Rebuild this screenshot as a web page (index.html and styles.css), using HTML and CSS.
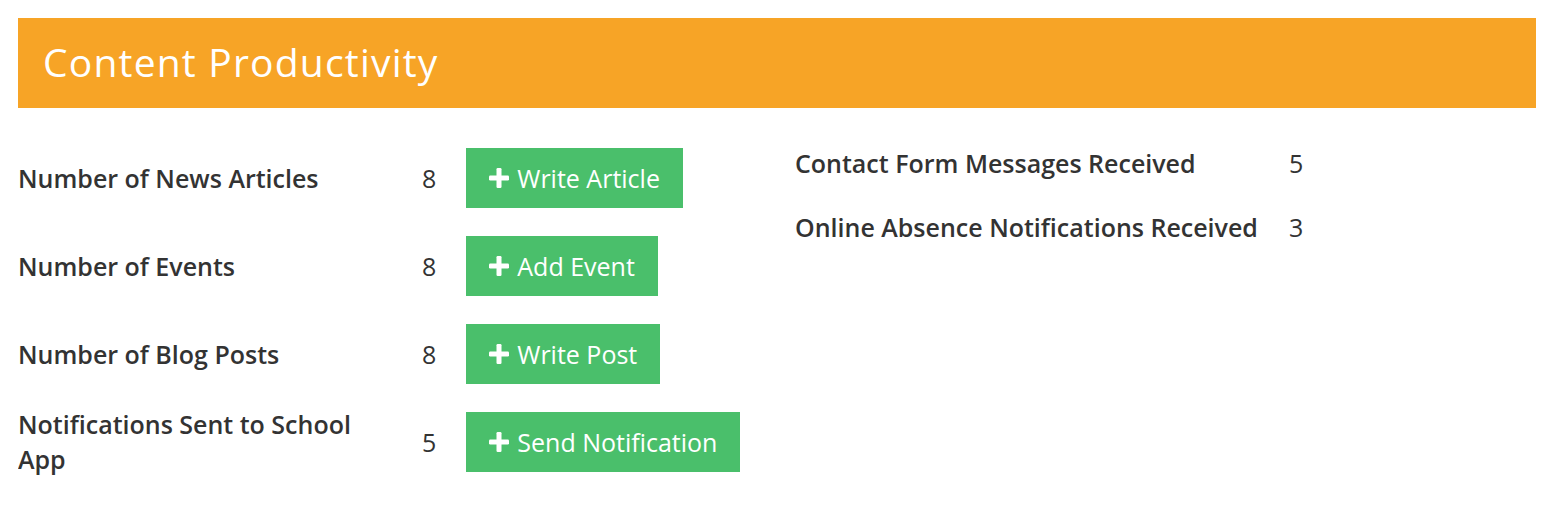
FILE: index.html
```html
<!DOCTYPE html>
<html lang="en">
<head>
    <meta charset="UTF-8">
    <meta name="viewport" content="width=device-width, initial-scale=1.0">
    <title>Content Productivity</title>
    <link rel="stylesheet" href="styles.css">
</head>
<body>
    <div class="panel">
        <h2 class="panel-title">Content Productivity</h2>
        <div class="panel-body">
            <div class="stats">
                <div class="stat-row">
                    <span class="stat-label">Number of News Articles</span>
                    <span class="stat-value">8</span>
                    <a href="#" class="btn-add">
                        <svg width="22" height="20" viewBox="0 0 22 20"><rect x="8.5" y="0" width="5" height="20" rx="1.2"/><rect x="1" y="7.5" width="20" height="5" rx="1.2"/></svg>
                        Write Article
                    </a>
                </div>
                <div class="stat-row">
                    <span class="stat-label">Number of Events</span>
                    <span class="stat-value">8</span>
                    <a href="#" class="btn-add">
                        <svg width="22" height="20" viewBox="0 0 22 20"><rect x="8.5" y="0" width="5" height="20" rx="1.2"/><rect x="1" y="7.5" width="20" height="5" rx="1.2"/></svg>
                        Add Event
                    </a>
                </div>
                <div class="stat-row">
                    <span class="stat-label">Number of Blog Posts</span>
                    <span class="stat-value">8</span>
                    <a href="#" class="btn-add">
                        <svg width="22" height="20" viewBox="0 0 22 20"><rect x="8.5" y="0" width="5" height="20" rx="1.2"/><rect x="1" y="7.5" width="20" height="5" rx="1.2"/></svg>
                        Write Post
                    </a>
                </div>
                <div class="stat-row">
                    <span class="stat-label">Notifications Sent to School App</span>
                    <span class="stat-value">5</span>
                    <a href="#" class="btn-add">
                        <svg width="22" height="20" viewBox="0 0 22 20"><rect x="8.5" y="0" width="5" height="20" rx="1.2"/><rect x="1" y="7.5" width="20" height="5" rx="1.2"/></svg>
                        Send Notification
                    </a>
                </div>
            </div>
            <div class="stats-right">
                <span class="stat-label">Contact Form Messages Received</span>
                <span class="stat-value">5</span>
                <span class="stat-label">Online Absence Notifications Received</span>
                <span class="stat-value">3</span>
            </div>
        </div>
    </div>
</body>
</html>
```

FILE: styles.css
```css
body {
    font-family: "Open Sans", Arial, sans-serif;
    background-color: white;
    color: #333;
    margin: 18px 20px 0 18px;
}
.panel-title {
    background-color: #f7a426;
    color: white;
    font-weight: 400;
    font-size: 39px;
    letter-spacing: 1.2px;
    height: 90px;
    line-height: 88px;
    margin: 0;
    padding-left: 25px;
}
.panel-body {
    display: grid;
    grid-template-columns: 777px 1fr;
    margin-top: 26px;
}
.stat-row {
    display: grid;
    grid-template-columns: 374px auto auto;
    column-gap: 30px;
    justify-content: start;
    align-items: center;
    min-height: 88px;
}
.stat-label {
    font-size: 25px;
    font-weight: 600;
    line-height: 35px;
}
.stat-value {
    font-size: 25px;
    line-height: 35px;
}
.btn-add {
    display: inline-flex;
    align-items: center;
    gap: 7px;
    height: 60px;
    padding: 0 23px 0 22px;
    background-color: #4abf6b;
    color: white;
    font-size: 25px;
    text-decoration: none;
}
.btn-add svg {
    fill: white;
}
.stats-right {
    display: grid;
    grid-template-columns: max-content max-content;
    column-gap: 31px;
    row-gap: 29px;
    align-content: start;
    margin-top: 12px;
}
```
